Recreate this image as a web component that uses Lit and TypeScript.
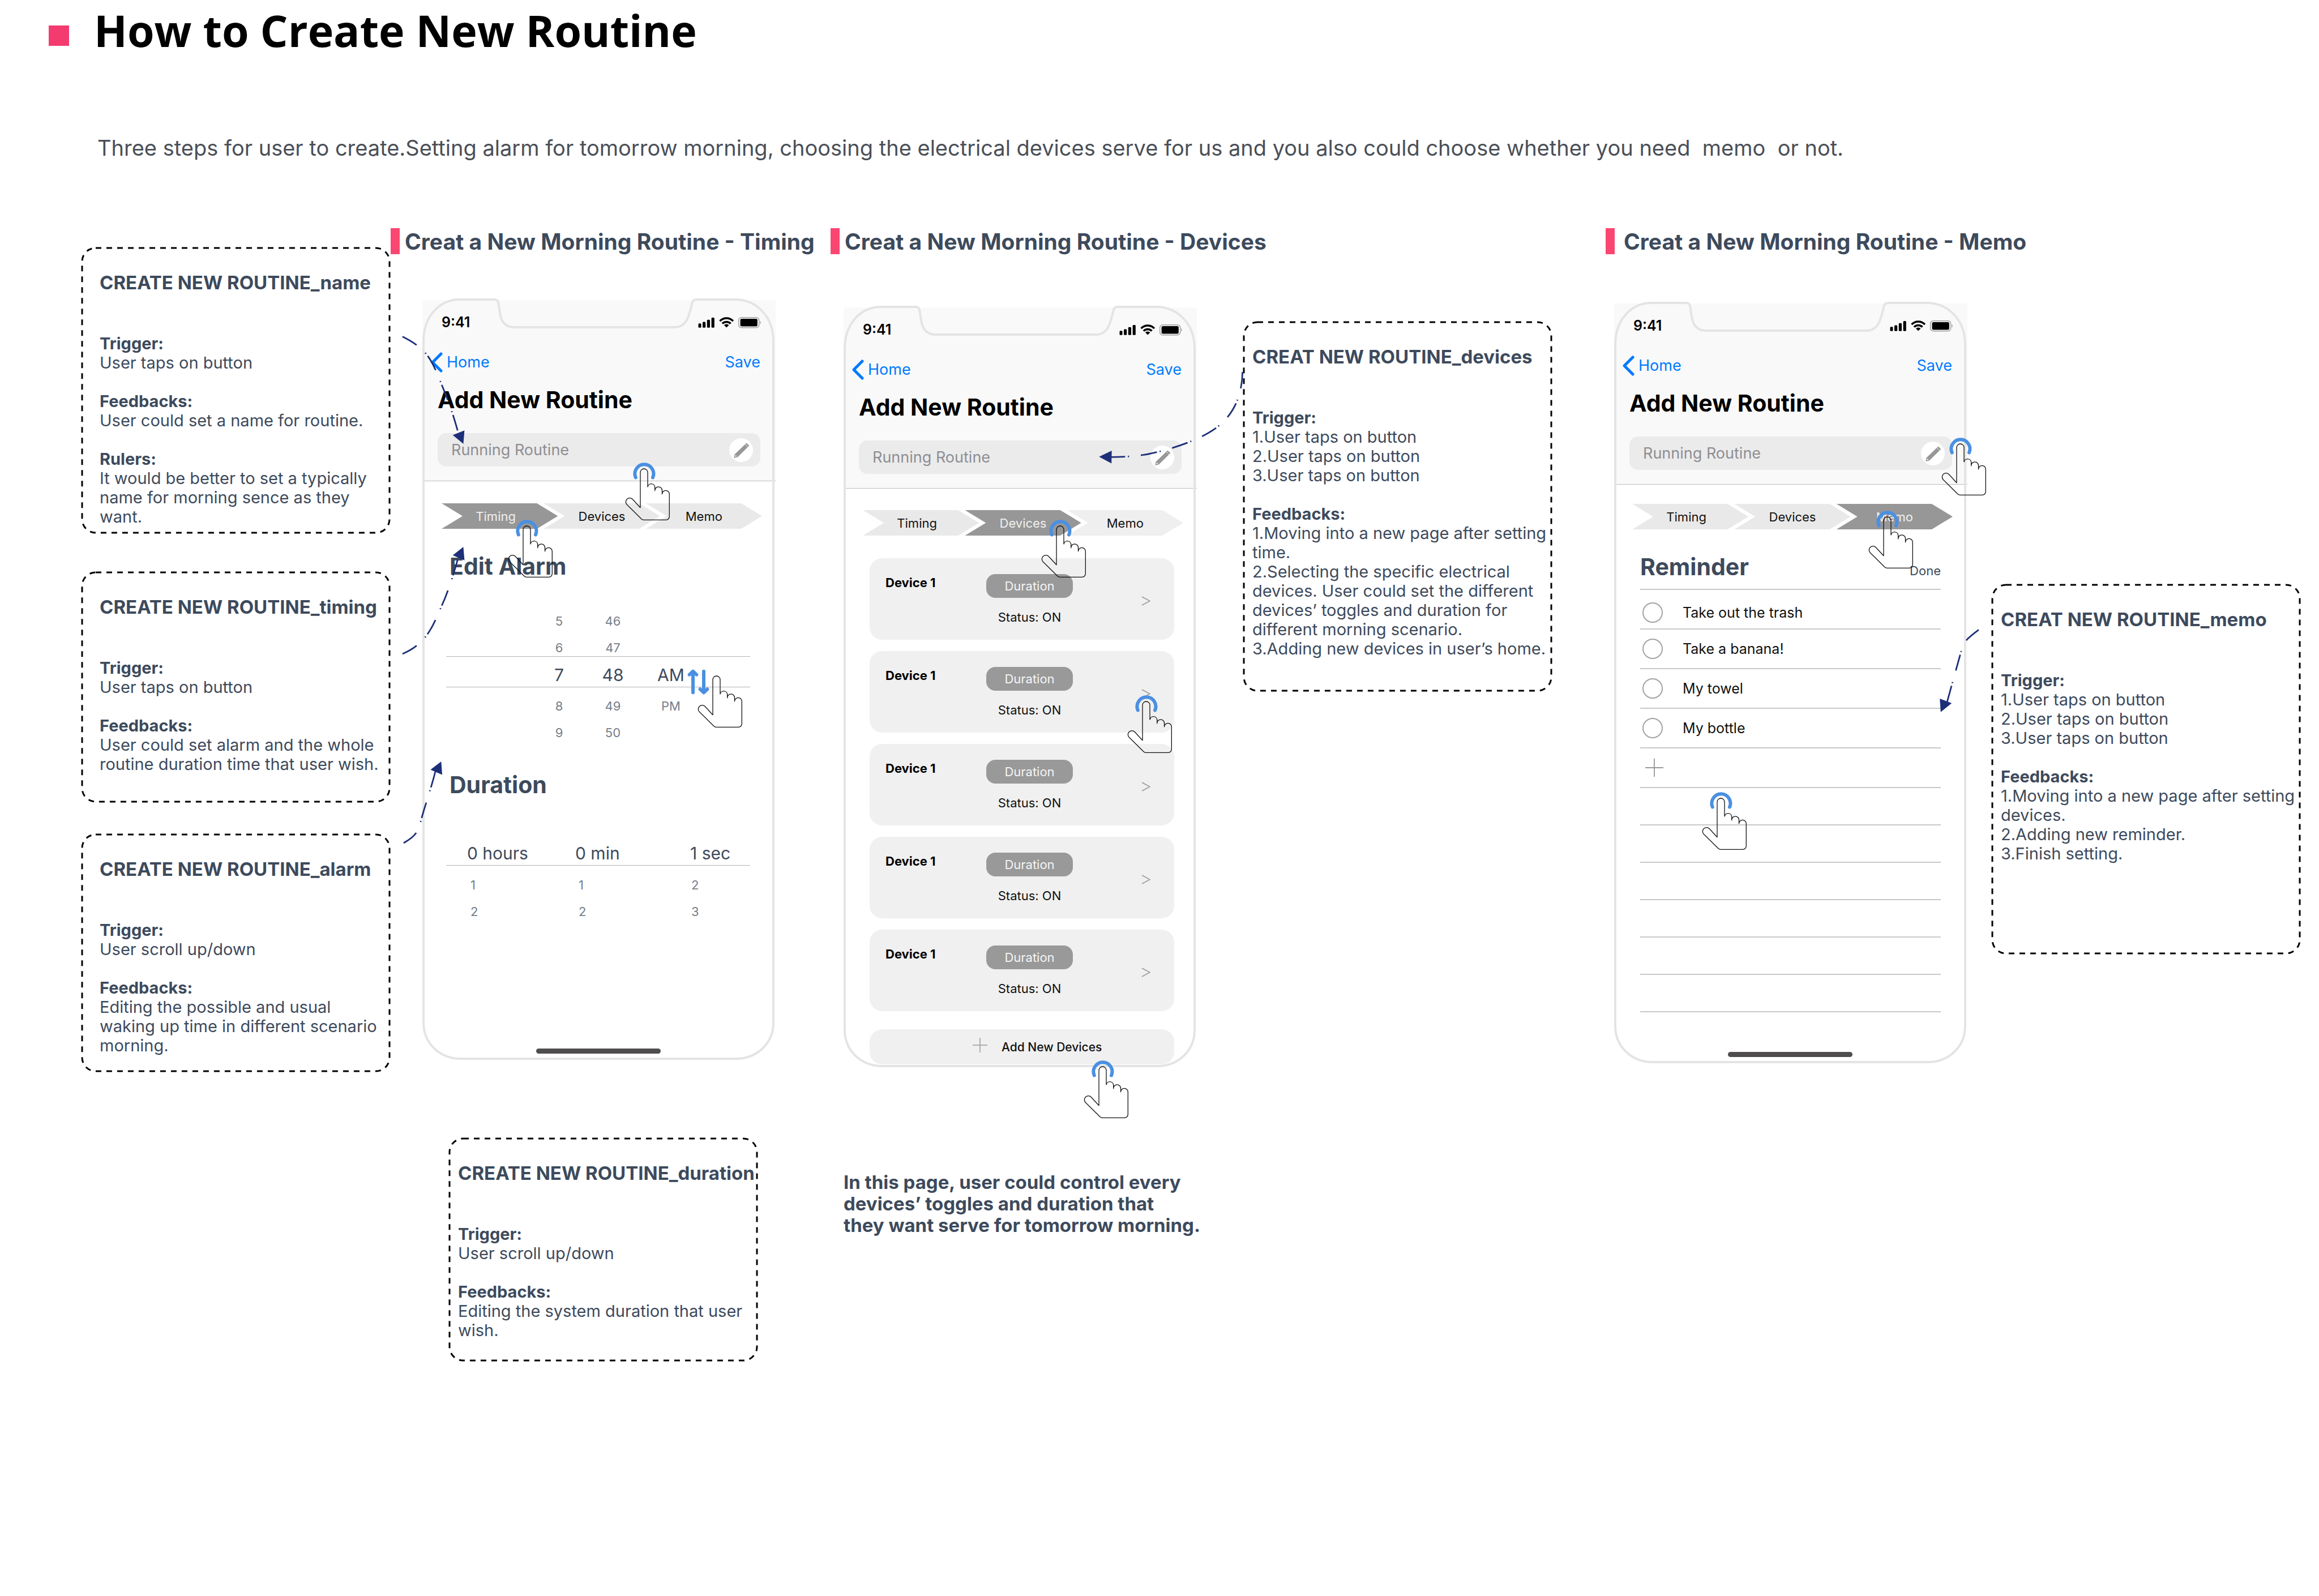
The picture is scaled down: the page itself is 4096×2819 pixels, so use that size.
import { LitElement, html, svg, css, nothing } from "lit";
import { customElement, property } from "lit/decorators.js";
import { classMap } from "lit/directives/class-map.js";
import { styleMap } from "lit/directives/style-map.js";

const base = css`
  *,
  *::before,
  *::after {
    box-sizing: border-box;
  }
  h1,
  h2,
  h3,
  h4,
  p,
  ul,
  ol,
  li,
  figure {
    margin: 0;
    padding: 0;
    list-style: none;
  }
  button,
  input {
    margin: 0;
    padding: 0;
    border: 0;
    background: none;
    font: inherit;
    color: inherit;
    text-align: left;
  }
`;

interface NoteBlock {
  label: string;
  lines: string[];
}

/* Dashed call-out card describing one interaction. */
@customElement("spec-note")
export class SpecNote extends LitElement {
  @property() heading = "";
  @property({ attribute: false }) blocks: NoteBlock[] = [];

  static styles = [
    base,
    css`
      :host {
        display: block;
        position: relative;
        color: #3d4a5c;
        font: 400 29px/34px Inter, "Liberation Sans", sans-serif;
      }
      .outline {
        position: absolute;
        inset: 0;
        width: 100%;
        height: 100%;
        overflow: visible;
      }
      .outline rect {
        x: 2px;
        y: 2px;
        width: calc(100% - 4px);
        height: calc(100% - 4px);
        rx: 24px;
        fill: none;
        stroke: #000;
        stroke-width: 3px;
        stroke-dasharray: 10 9;
      }
      .body {
        padding: 46px 0 10px var(--note-inset, 33px);
        white-space: nowrap;
      }
      .title {
        font-size: 33px;
        line-height: 34px;
        font-weight: 700;
        margin-bottom: 74px;
      }
      .block + .block {
        margin-top: 34px;
      }
      .label {
        font-size: 29px;
        font-weight: 700;
      }
    `,
  ];

  render() {
    return html`
      <svg class="outline" aria-hidden="true"><rect></rect></svg>
      <div class="body">
        <h3 class="title">${this.heading}</h3>
        ${this.blocks.map(
          (b) => html`<div class="block">
            <h4 class="label">${b.label}</h4>
            ${b.lines.map((l) => html`<p>${l}</p>`)}
          </div>`
        )}
      </div>
    `;
  }
}

/* Pointing hand, with a tap ring or a pair of scroll arrows. */
const hand = (x: number, y: number, kind: "tap" | "scroll" = "tap") => html`
  <svg
    class="hand"
    viewBox="-20 -14 100 106"
    aria-hidden="true"
    style=${styleMap({ left: `${x - 20}px`, top: `${y - 14}px` })}
  >
    ${kind === "tap"
      ? svg`<path class="blue" d="M17.8 15.5A16.5 16.5 0 1 1 48 15.5"/>`
      : svg`<path class="blue" d="M-9 29.3V-7.5M-15.3 -2.3L-9 -8.3L-2.8 -2.3M10 -8.3V28.6M3.7 23.3L10 29.3L16.3 23.3"/>`}
    <path
      class="line"
      d="M39 32.3V6.5A6.5 6.5 0 0 0 26 6.5V68.7L12.5 54A6.8 6.8 0 0 0 2 63L27.8 88.5Q29.8 90.3 32 90.3H71.3A6 6 0 0 0 77.3 84V44.7A6.4 6.4 0 0 0 64.5 44.7V38.3A6.4 6.4 0 0 0 51.7 38.3V32.3A6.4 6.4 0 0 0 39 32.3M64.5 38V45.3M51.7 32V39.3"
    />
  </svg>
`;

const STEPS = ["Timing", "Devices", "Memo"];

/* Phone mock-up: shared chrome on top, one of three panels below. */
@customElement("phone-screen")
export class PhoneScreen extends LitElement {
  @property() screen: "timing" | "devices" | "memo" = "timing";

  static styles = [
    base,
    css`
      :host {
        display: flex;
        flex-direction: column;
        position: relative;
        min-height: 1345px;
        padding: 3px 0;
        font: 400 22px/30px Inter, "Liberation Sans", sans-serif;
        color: #111;
      }
      .frame {
        position: absolute;
        inset: 0;
        width: 100%;
        height: 100%;
        fill: none;
        stroke: #e4e4e4;
        stroke-width: 4px;
        pointer-events: none;
      }
      .hand {
        position: absolute;
        width: 100px;
        height: 106px;
        fill: none;
        pointer-events: none;
      }
      .hand .blue {
        stroke: #4a90e2;
        stroke-width: 6px;
        stroke-linecap: round;
        stroke-linejoin: round;
      }
      .hand .line {
        stroke: #111;
        stroke-width: 1.3px;
        stroke-linejoin: round;
      }

      .bar {
        width: calc(100% + 2px);
        padding: 0 27px 25px;
        background: #f9f9f9;
        border-bottom: 1px solid #bdbdbd;
      }
      .status {
        display: flex;
        align-items: center;
        justify-content: space-between;
        height: 78px;
        margin: 0 -2px 0 7px;
        font-size: 25px;
        font-weight: 600;
        color: #000;
      }
      .status svg {
        width: 112px;
        height: 21px;
      }
      .nav {
        display: flex;
        align-items: center;
        justify-content: space-between;
        height: 64px;
        margin-left: -13px;
        font-size: 27px;
        color: #007aff;
      }
      .back {
        display: flex;
        align-items: center;
        gap: 7px;
        color: inherit;
        text-decoration: none;
      }
      .back svg {
        width: 22px;
        height: 36px;
        fill: none;
        stroke: #007aff;
        stroke-width: 5px;
        stroke-linecap: round;
        stroke-linejoin: round;
      }
      .name {
        font-size: 41px;
        line-height: 68px;
        font-weight: 700;
        color: #000;
        margin-bottom: 25px;
      }
      .field {
        display: flex;
        align-items: center;
        height: 59px;
        padding: 0 13px 0 24px;
        border-radius: 15px;
        background: #ebebeb;
      }
      .field input {
        flex: 1;
        min-width: 0;
        font-size: 27px;
        outline: 0;
      }
      .field input::placeholder {
        color: #8e8e93;
        opacity: 1;
      }
      .edit {
        width: 42px;
        height: 42px;
        border-radius: 50%;
        background: #fff;
      }
      .edit svg {
        display: block;
        width: 42px;
        height: 42px;
      }

      .steps {
        display: flex;
        margin: 39px 22px 0 34px;
      }
      .steps.devices {
        margin-top: 38px;
      }
      .steps.memo {
        margin-top: 34px;
        margin-left: 32px;
        margin-right: 24px;
      }
      .step {
        flex: 1;
        height: 45px;
        background: #e9e9e9;
        clip-path: polygon(
          0 0,
          calc(100% - 37px) 0,
          100% 50%,
          calc(100% - 37px) 100%,
          0 100%,
          37px 50%
        );
      }
      .step + .step {
        margin-left: -25px;
      }
      .step:first-child button {
        padding-right: 14px;
      }
      .step button {
        width: 100%;
        height: 100%;
        text-align: center;
      }
      .step.on {
        background: #979797;
        color: #f0f0f0;
      }
      .steps.devices .step:last-child {
        background: #efefef;
      }

      .head {
        font-size: 41px;
        line-height: 48px;
        font-weight: 700;
        color: #3d4a5c;
      }

      .timing-panel {
        margin: 42px 43px 0 42px;
        color: #747e8c;
      }
      .timing-panel .head {
        padding-left: 6px;
      }
      .wheel {
        margin-top: 58px;
      }
      .tick {
        display: grid;
        grid-template-columns: 152px 95px 95px 110px;
        text-align: center;
      }
      .tick + .tick {
        margin-top: 17px;
      }
      .tick span:first-child {
        grid-column: 2;
      }
      .wheel .now {
        margin: 0;
        padding-top: 11px;
        border-top: 1px solid #b4b4b4;
        border-bottom: 1px solid #b4b4b4;
      }
      .now {
        font-size: 30px;
        line-height: 42px;
        color: #3d4a5c;
      }
      .tick.now + .tick {
        margin-top: 18px;
      }
      .second {
        margin-top: 53px;
      }
      .spans {
        margin-top: 76px;
      }
      .span {
        display: grid;
        grid-template-columns: 191px 203px 1fr;
        padding-left: 37px;
      }
      .span.now {
        border-bottom: 1px solid #b4b4b4;
        margin-bottom: 19px;
      }
      .span.small span {
        padding-left: 6px;
      }
      .span.small span:last-child {
        padding-left: 2px;
      }
      .span.small + .small {
        margin-top: 17px;
      }

      .cards {
        display: flex;
        flex-direction: column;
        gap: 20px;
        margin: 40px 38px 0 46px;
      }
      .card {
        display: flex;
        height: 144px;
        padding: 28px 42px 0 28px;
        border-radius: 22px;
        background: #f0f0f0;
      }
      .card h4 {
        width: 178px;
        font-size: 22px;
        font-weight: 700;
        color: #000;
      }
      .mid {
        width: 153px;
        text-align: center;
      }
      .pill {
        display: block;
        width: 100%;
        height: 42px;
        border-radius: 16px;
        background: #999;
        color: #f4f4f4;
        text-align: center;
      }
      .mid p {
        margin-top: 19px;
      }
      .more {
        height: 94px;
        margin-left: auto;
      }
      .more svg {
        display: block;
        width: 15px;
        height: 17px;
        fill: none;
        stroke: #999;
        stroke-width: 1.6px;
      }
      .add {
        display: flex;
        align-items: center;
        height: 62px;
        margin: 32px 38px 0 46px;
        padding: 0 0 0 182px;
        border-radius: 22px;
        background: #f0f0f0;
        font-size: 21px;
        font-weight: 500;
        gap: 25px;
      }
      .add span {
        padding-top: 2px;
      }
      .plus {
        width: 26px;
        height: 26px;
        fill: none;
        stroke: #999;
        stroke-width: 1.5px;
      }
      .add .plus {
        margin-bottom: 6px;
      }

      .memo-panel {
        margin: 42px 45px 0 46px;
      }
      .memo-head {
        display: flex;
        align-items: baseline;
        justify-content: space-between;
        padding-bottom: 15px;
        border-bottom: 2px solid #c8c8c8;
        color: #3d4a5c;
      }
      .row {
        display: flex;
        align-items: center;
        height: 70px;
        border-bottom: 2px solid #c8c8c8;
      }
      .row:first-child {
        padding-top: 12px;
      }
      .row.blank {
        height: 66px;
      }
      .row label {
        display: flex;
        align-items: center;
        gap: 35px;
        padding-left: 4px;
        font-size: 25px;
      }
      .row input {
        appearance: none;
        width: 36px;
        height: 36px;
        border: 2px solid #a3a3a3;
        border-radius: 50%;
        background: #fff;
      }
      .row button {
        margin-left: 9px;
      }
      .row .plus {
        display: block;
        width: 32px;
        height: 32px;
      }
      .home {
        width: 220px;
        height: 9px;
        margin: auto auto 8px;
        border-radius: 5px;
        background: #4f4d4d;
      }
    `,
  ];

  private plus = html`<svg class="plus" viewBox="0 0 26 26" aria-hidden="true">
    <path d="M13 0V26M0 13H26" />
  </svg>`;

  private timing() {
    return html`
      <div class="timing-panel">
        <h3 class="head">Edit Alarm</h3>
        <div class="wheel">
          <div class="tick"><span>5</span><span>46</span></div>
          <div class="tick"><span>6</span><span>47</span></div>
          <div class="tick now"><span>7</span><span>48</span><span>AM</span></div>
          <div class="tick"><span>8</span><span>49</span><span>PM</span></div>
          <div class="tick"><span>9</span><span>50</span></div>
        </div>
        <h3 class="head second">Duration</h3>
        <div class="spans">
          <div class="span now"><span>0 hours</span><span>0 min</span><span>1 sec</span></div>
          <div class="span small"><span>1</span><span>1</span><span>2</span></div>
          <div class="span small"><span>2</span><span>2</span><span>3</span></div>
        </div>
      </div>
      <div class="home"></div>
      ${hand(359, 301)} ${hand(152, 402)} ${hand(487, 667, "scroll")}
    `;
  }

  private devices() {
    return html`
      <ul class="cards">
        ${[1, 2, 3, 4, 5].map(
          () => html`<li class="card">
            <h4>Device 1</h4>
            <div class="mid">
              <button class="pill" type="button">Duration</button>
              <p>Status: ON</p>
            </div>
            <button class="more" type="button" aria-label="Open device">
              <svg viewBox="0 0 15 17"><path d="M0 1L14 8.5L0 16" /></svg>
            </button>
          </li>`
        )}
      </ul>
      <button class="add" type="button">${this.plus}<span>Add New Devices</span></button>
      ${hand(350, 389)} ${hand(502, 699)} ${hand(425, 1344)}
    `;
  }

  private memo() {
    const items = ["Take out the trash", "Take a banana!", "My towel", "My bottle"];
    return html`
      <div class="memo-panel">
        <div class="memo-head">
          <h3 class="head">Reminder</h3>
          <button type="button">Done</button>
        </div>
        <ul>
          ${items.map(
            (t) => html`<li class="row">
              <label><input type="checkbox" />${t}</label>
            </li>`
          )}
          <li class="row">
            <button type="button" aria-label="Add reminder">${this.plus}</button>
          </li>
          ${[1, 2, 3, 4, 5, 6].map(() => html`<li class="row blank"></li>`)}
        </ul>
      </div>
      <div class="home"></div>
      ${hand(579, 251)} ${hand(450, 380)} ${hand(156, 877)}
    `;
  }

  render() {
    const active = { timing: 0, devices: 1, memo: 2 }[this.screen];
    return html`
      <header class="bar">
        <div class="status">
          <span>9:41</span>
          <svg viewBox="0 0 112 21" aria-hidden="true">
            <rect x="0.5" y="12.2" width="5" height="7.5" rx="1.5" />
            <rect x="8" y="9.4" width="5.2" height="10.3" rx="1.5" />
            <rect x="15.8" y="5.8" width="5.2" height="13.9" rx="1.5" />
            <rect x="23.6" y="1.9" width="5.2" height="17.8" rx="1.5" />
            <g fill="none" stroke="#000" stroke-width="3.5">
              <path d="M38.5 8.1A16 16 0 0 1 61.9 8.1" />
              <path d="M42.9 12.6A10 10 0 0 1 57.5 12.6" />
            </g>
            <path d="M50.2 19.4L45.9 15.3A6 6 0 0 1 54.5 15.3Z" />
            <rect x="71.7" y="1.7" width="36" height="18" rx="5" fill="none" stroke="#a0a0a0" stroke-width="1.5" />
            <rect x="74.6" y="4" width="30.2" height="13.4" rx="2.5" />
            <path d="M109.5 7.8A3.6 3.6 0 0 1 109.5 13.6Z" fill="#a0a0a0" />
          </svg>
        </div>
        <nav class="nav">
          <a class="back" href="#home">
            <svg viewBox="0 0 22 36" aria-hidden="true"><path d="M19 3L4 18L19 33" /></svg>Home
          </a>
          <button type="button">Save</button>
        </nav>
        <h2 class="name">Add New Routine</h2>
        <div class="field">
          <input type="text" placeholder="Running Routine" aria-label="Routine name" />
          <button class="edit" type="button" aria-label="Edit name">
            <svg viewBox="0 0 42 42">
              <path fill="#979797" d="M8.3 35L9.6 28.6L30.4 8.4L35.4 13.2L14.8 33.4Z" />
              <path fill="#fff" d="M10.4 32.8L11.1 29.8L13.5 32.1Z" />
              <path stroke="#fff" stroke-width="0.8" d="M27.6 10.4L33.2 16" />
            </svg>
          </button>
        </div>
      </header>
      <ol class=${classMap({ steps: true, [this.screen]: true })}>
        ${STEPS.map(
          (s, i) => html`<li class=${classMap({ step: true, on: i === active })}>
            <button type="button" aria-current=${i === active ? "step" : nothing}>${s}</button>
          </li>`
        )}
      </ol>
      <svg class="frame" viewBox="0 0 622 1345" preserveAspectRatio="none" aria-hidden="true">
        <path
          d="M66 2H127Q132.500 2 134 7C137 22 136.500 33 142 41Q149 51 161 51H446Q459 51 466 40C472 31 474 18 477 7Q478.500 2 484 2H552C590 2 620 32 620 76V1279C620 1317 590 1343 554 1343H68C32 1343 2 1317 2 1279V76C2 32 30 2 66 2Z"
        />
      </svg>
      ${this.screen === "timing" ? this.timing() : this.screen === "devices" ? this.devices() : this.memo()}
    `;
  }
}

const TRIGGER = "Trigger:";
const FEEDBACKS = "Feedbacks:";
const TAPS = ["1.User taps on button", "2.User taps on button", "3.User taps on button"];

const NOTES: Record<string, NoteBlock[]> = {
  name: [
    { label: TRIGGER, lines: ["User taps on button"] },
    { label: FEEDBACKS, lines: ["User could set a name for routine."] },
    {
      label: "Rulers:",
      lines: ["It would be better to set a typically", "name for morning sence as they", "want."],
    },
  ],
  timing: [
    { label: TRIGGER, lines: ["User taps on button"] },
    {
      label: FEEDBACKS,
      lines: ["User could set alarm and the whole", "routine duration time that user wish."],
    },
  ],
  alarm: [
    { label: TRIGGER, lines: ["User scroll up/down"] },
    {
      label: FEEDBACKS,
      lines: ["Editing the possible and usual", "waking up time in different scenario", "morning."],
    },
  ],
  duration: [
    { label: TRIGGER, lines: ["User scroll up/down"] },
    { label: FEEDBACKS, lines: ["Editing the system duration that user", "wish."] },
  ],
  devices: [
    { label: TRIGGER, lines: TAPS },
    {
      label: FEEDBACKS,
      lines: [
        "1.Moving into a new page after setting",
        "time.",
        "2.Selecting the specific electrical",
        "devices. User could set the different",
        "devices’ toggles and duration for",
        "different morning scenario.",
        "3.Adding new devices in user’s home.",
      ],
    },
  ],
  memo: [
    { label: TRIGGER, lines: TAPS },
    {
      label: FEEDBACKS,
      lines: [
        "1.Moving into a new page after setting",
        "devices.",
        "2.Adding new reminder.",
        "3.Finish setting.",
      ],
    },
  ],
};

@customElement("app-root")
export class AppRoot extends LitElement {
  static styles = [
    base,
    css`
      :host {
        display: block;
        position: relative;
        min-height: 100vh;
        background: #fff;
        color: #3d4a5c;
        font-family: Inter, "Liberation Sans", sans-serif;
      }
      .top {
        display: flex;
        align-items: flex-end;
        gap: 44px;
        padding: 14px 0 0 86px;
      }
      .square {
        width: 36px;
        height: 36px;
        margin-bottom: 13px;
        background: #f43b6f;
      }
      .title {
        font: 700 77px/80px "Open Sans", "Noto Sans", sans-serif;
        color: #000;
      }
      .lead {
        margin: 144px 0 119px 172px;
        font-size: 38px;
        line-height: 46px;
        white-space: pre;
        color: #4a4f57;
      }
      .board {
        display: grid;
        grid-template-columns:
          143fr 547fr 678fr 99fr 645fr 83fr 547fr 94fr
          637fr 44fr 547fr 32fr;
        align-items: start;
      }
      .board > * {
        min-width: 0;
      }
      .notes {
        grid-column: 2;
        padding-top: 33px;
      }
      .note-name {
        min-height: 507px;
        margin-bottom: 66px;
      }
      .note-timing {
        min-height: 409px;
        margin-bottom: 54px;
      }
      .note-alarm {
        min-height: 422px;
      }
      .compact {
        --note-inset: 17px;
      }
      .note-duration {
        width: 547px;
        min-height: 396px;
        margin: 137px 0 0 46px;
      }
      .note-devices {
        grid-column: 7;
        min-height: 655px;
        margin-top: 164px;
      }
      .note-memo {
        grid-column: 11;
        min-height: 655px;
        margin-top: 628px;
      }
      .flow {
        display: flex;
        flex-direction: column;
      }
      .flow.timing {
        grid-column: 3;
        padding-left: 56px;
      }
      .flow.devices {
        grid-column: 5;
        padding-left: 23px;
      }
      .flow.memo {
        grid-column: 9;
        padding-left: 15px;
      }
      .heading {
        display: flex;
        gap: 9px;
        font-size: 39px;
        line-height: 48px;
        height: 46px;
        font-weight: 700;
        white-space: nowrap;
      }
      .heading::before {
        content: "";
        flex: none;
        width: 16px;
        height: 46px;
        background: #fb4672;
      }
      .timing .heading {
        margin: 0 0 78px -56px;
      }
      .devices .heading {
        margin: 0 0 91px -23px;
      }
      .memo .heading {
        gap: 16px;
        margin: 0 0 84px -15px;
      }
      .caption {
        margin-top: 184px;
        font-size: 33px;
        line-height: 38px;
        font-weight: 700;
        white-space: pre;
      }
      .links {
        position: absolute;
        top: 0;
        left: 0;
        width: 100%;
        pointer-events: none;
      }
      .links .wire {
        fill: none;
        stroke: #1c2f78;
        stroke-width: 2.8px;
        stroke-dasharray: 29 21 2 5;
      }
      .links .tip {
        fill: #1c2f78;
      }
    `,
  ];

  render() {
    return html`
      <header class="top">
        <span class="square"></span>
        <h1 class="title">How to Create New Routine</h1>
      </header>
      <p class="lead">Three steps for user to create.Setting alarm for tomorrow morning, choosing the electrical devices serve for us and you also could choose whether you need  memo  or not.</p>
      <main class="board">
        <div class="notes">
          <spec-note class="note-name" heading="CREATE NEW ROUTINE_name" .blocks=${NOTES.name}></spec-note>
          <spec-note class="note-timing" heading="CREATE NEW ROUTINE_timing" .blocks=${NOTES.timing}></spec-note>
          <spec-note class="note-alarm" heading="CREATE NEW ROUTINE_alarm" .blocks=${NOTES.alarm}></spec-note>
        </div>
        <section class="flow timing">
          <h2 class="heading">Creat a New Morning Routine - Timing</h2>
          <phone-screen screen="timing"></phone-screen>
          <spec-note
            class="note-duration compact"
            heading="CREATE NEW ROUTINE_duration"
            .blocks=${NOTES.duration}
          ></spec-note>
        </section>
        <section class="flow devices">
          <h2 class="heading">Creat a New Morning Routine - Devices</h2>
          <phone-screen screen="devices"></phone-screen>
          <p class="caption">${"In this page, user could control every\ndevices’ toggles and duration that\nthey want serve for tomorrow morning."}</p>
        </section>
        <spec-note
          class="note-devices compact"
          heading="CREAT NEW ROUTINE_devices"
          .blocks=${NOTES.devices}
        ></spec-note>
        <section class="flow memo">
          <h2 class="heading">Creat a New Morning Routine - Memo</h2>
          <phone-screen screen="memo"></phone-screen>
        </section>
        <spec-note
          class="note-memo compact"
          heading="CREAT NEW ROUTINE_memo"
          .blocks=${NOTES.memo}
        ></spec-note>
      </main>
      <svg class="links" viewBox="0 0 4114 2831" aria-hidden="true">
        <path class="wire" d="M714 597C760 620 766 640 783 681S806 743 813 768" />
        <path class="tip" d="M803.3 772L824 763.5L822 787.5Z" />
        <path class="wire" d="M714 1160C760 1141 770 1104 783 1076S806 1014 813 989" />
        <path class="tip" d="M803.3 985L824 994L822 970.3Z" />
        <path class="wire" d="M716 1495.600C740 1482 742 1474 747.800 1452S764 1402 773 1366" />
        <path class="tip" d="M763.8 1365.5L784.500 1374.500L782.700 1351Z" />
        <path class="wire" d="M2204.300 660C2203 708 2185 738 2159 758S2080 798 2029 807Q2000 811 1970 811" />
        <path class="tip" d="M1949.800 810.300L1972.300 799.600L1971.800 822Z" />
        <path class="wire" d="M3510.300 1117.300C3488 1134 3484 1138 3479 1156S3460 1224 3453 1250" />
        <path class="tip" d="M3442.900 1263.400L3462.400 1247.500L3441.300 1239.300Z" />
      </svg>
    `;
  }
}
